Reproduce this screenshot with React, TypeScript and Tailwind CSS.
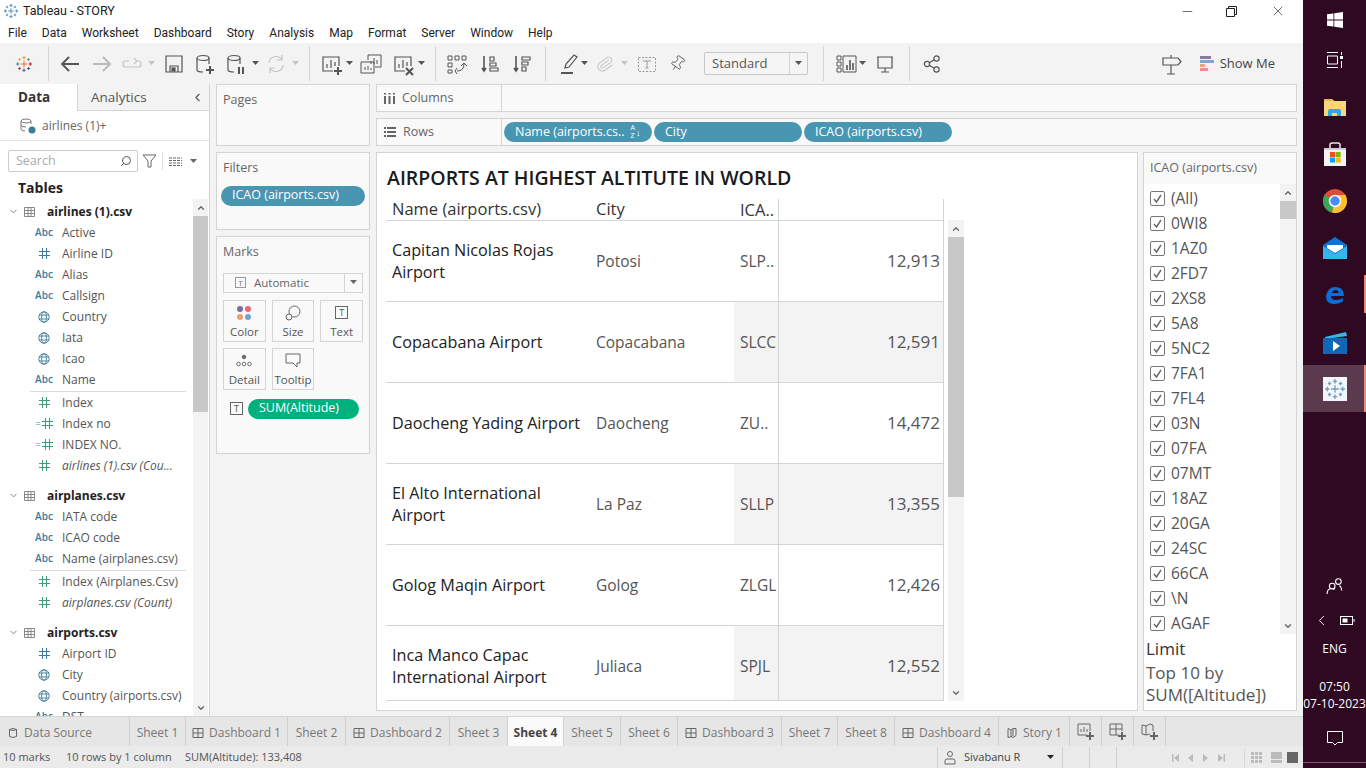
import type { ReactNode } from 'react';
import { X, Minus, ChevronLeft, ChevronDown, ChevronUp, Search, Paperclip, Pin } from 'lucide-react';

const S = ({ children, className = '' }: { children: ReactNode; className?: string }) => (
  <svg width="24" height="24" viewBox="0 0 24 24" fill="none" stroke="currentColor" strokeWidth="1.2" className={`shrink-0 ${className}`}>
    {children}
  </svg>
);

const Caret = ({ className = '' }: { className?: string }) => (
  <svg width="8" height="5" viewBox="0 0 8 5" className={`shrink-0 ${className}`}>
    <path d="M0 0h7L3.5 4z" fill="currentColor" />
  </svg>
);

const Sep = ({ className = '' }: { className?: string }) => <div className={`h-[35px] w-px shrink-0 bg-[#d4d4d4] ${className}`} />;

// plus marks of the logo, drawn on a 20 box
const plusMarks: [number, number, number, string][] = [
  [10, 10, 3.5, '#e8762b'],
  [10, 3, 2, '#e8a33d'],
  [10, 17, 2, '#5b6591'],
  [3, 10, 2, '#59879b'],
  [17, 10, 2, '#c72035'],
  [5, 5, 1.5, '#e8a33d'],
  [15, 5, 1.5, '#59879b'],
  [5, 15, 1.5, '#c72035'],
  [15, 15, 1.5, '#1f457e'],
];

function Plusses({ size, mono }: { size: number; mono?: string }) {
  return (
    <svg width={size} height={size} viewBox="0 0 20 20" className="shrink-0" strokeWidth="1.200">
      {plusMarks.map(([x, y, r, col], i) => (
        <path key={i} d={`M${x - r} ${y}h${r * 2}M${x} ${y - r}v${r * 2}`} stroke={mono ?? col} fill="none" />
      ))}
    </svg>
  );
}

function Toolbar() {
  return (
    <div className="flex h-[41px] shrink-0 items-center bg-[#f3f3f3] text-[#555]">
      <div className="ml-[15px]"><Plusses size={18} /></div>
      <Sep className="ml-[15px]" />
      <S className="ml-[9px]"><path d="M21 12H5M11 5l-7 7 7 7" strokeWidth="1.8" /></S>
      <S className="ml-[8px] text-[#b9b9b9]"><path d="M3 12h16M13 5l7 7-7 7" strokeWidth="1.8" /></S>
      <S className="ml-[6px] text-[#c4c4c4]"><path d="M9 9H5q-2 0-2 3t2 3h14q2 0 2-3t-2-3h-2M14 6l3 3-3 3" /></S>
      <Caret className="ml-[4px] text-[#c4c4c4]" />
      <S className="ml-[6px]"><path d="M4 4h16v16H4zM8 20v-6h8v6" /><rect x="10" y="16" width="3" height="3" fill="currentColor" /></S>
      <S className="ml-[7px]"><ellipse cx="10" cy="6" rx="6" ry="2.5" /><path d="M4 6v12q0 2 6 2M16 6v6" /><path d="M17 14v8M13 18h8" strokeWidth="2" /></S>
      <S className="ml-[7px]"><ellipse cx="10" cy="6" rx="6" ry="2.5" /><path d="M4 6v12q0 2 6 2M16 6v6" /><path d="M15 15v7M19 15v7" strokeWidth="2" /></S>
      <Caret className="ml-[4px]" />
      <S className="ml-[4px] text-[#c4c4c4]"><path d="M5 11a7 7 0 0 1 13-3M19 13a7 7 0 0 1-13 3M18 3v5h-5M6 21v-5h5" /></S>
      <Caret className="ml-[4px] text-[#c4c4c4]" />
      <Sep className="ml-[9px]" />
      <S className="ml-[9px]"><path d="M14 19H4V5h16v9M8 16v-4M12 16V8M16 14v-4" /><path d="M19 15v8M15 19h8" strokeWidth="2" /></S>
      <Caret className="ml-[3px]" />
      <S className="ml-[5px]"><path d="M9 8V3h13v12h-6M12 12V9M15 12V6M18 12V8M2 10h13v11H2zM6 18v-3M9 18v-4M12 18v-2" strokeWidth="1" /></S>
      <S className="ml-[8px]"><path d="M14 19H4V5h16v9M8 16v-4M12 16V8M16 14v-4" /><path d="M15 16l7 7M22 16l-7 7" strokeWidth="2" /></S>
      <Caret className="ml-[3px]" />
      <Sep className="ml-[9px]" />
      <S className="ml-[9px]"><path d="M3 4h4v4H3zM3 11h4v4H3zM10 4h4v4h-4zM17 4h4v4h-4zM3 18h4v3H3zM12 19q7 0 7-7M16 14l3-3 3 3M12 16l-2 3 2 3" strokeWidth="1" /></S>
      <S className="ml-[9px]"><path d="M6 4v15M4 16l2 3 2-3" strokeWidth="1.6" /><path d="M12 5h4v4h-4zM12 11h6v3h-6zM12 16h8v3h-8z" /></S>
      <S className="ml-[8px]"><path d="M6 4v15M4 16l2 3 2-3" strokeWidth="1.6" /><path d="M12 5h8v3h-8zM12 10h6v3h-6zM12 15h4v4h-4z" /></S>
      <Sep className="ml-[11px]" />
      <S className="ml-[10px]"><path d="M9 16l1-4 8-9 3 2-8 10zM9 16l4-1" /><path d="M5 21h12" strokeWidth="2" /></S>
      <Caret className="ml-[1px]" />
      <div className="ml-[4px] flex h-[24px] w-[24px] shrink-0 items-center justify-center text-[#c4c4c4]"><Paperclip size={18} strokeWidth={1.300} className="rotate-[10deg]" /></div>
      <Caret className="ml-[4px] text-[#c4c4c4]" />
      <S className="ml-[6px] text-[#999]"><rect x="3.5" y="5.5" width="17" height="14" strokeDasharray="2 1.5" strokeWidth="1" /><path d="M8 9h8M12 9v7M10.5 16h3" strokeWidth="1" /></S>
      <div className="ml-[6px] flex h-[24px] w-[24px] shrink-0 items-center justify-center"><Pin size={17} strokeWidth={1.200} className="rotate-[35deg]" /></div>
      <div className="ml-[15px] flex h-[23px] w-[104px] shrink-0 items-center rounded-[2px] border border-[#c8c8c8] bg-[#f5f5f5]">
        <span className="flex-1 pl-[7px] text-[13px] text-[#555]">Standard</span>
        <div className="flex h-full w-[18px] items-center justify-center border-l border-[#d4d4d4]"><Caret /></div>
      </div>
      <Sep className="ml-[15px]" />
      <S className="ml-[11px]"><path d="M2 4h4v4H2zM2 10h4v4H2zM2 16h4v4H2zM8 4h13v16H8z" strokeWidth="1" /><path d="M12 18v-5M15 18V8M18 18v-7" strokeWidth="1.6" /></S>
      <Caret />
      <S className="ml-[6px]"><path d="M4 5h16M5 5v11h14V5M12 16v4M8 20h8" /></S>
      <Sep className="ml-[12px]" />
      <S className="ml-[10px]"><circle cx="7" cy="12" r="2.600" /><circle cx="16.500" cy="6.500" r="2.600" /><circle cx="16.500" cy="17.500" r="2.600" /><path d="M9.300 10.700l5-3M9.300 13.300l5 3" /></S>
      <S className="ml-auto"><path d="M3 6h15l3 3.5-3 3.5H3zM11 6V3M11 13v9M7 22h8" /></S>
      <div className="ml-[16px] flex flex-col gap-px">
        <div className="h-[3px] w-[11px] bg-[#8b7aa6]" />
        <div className="h-[3px] w-[14px] bg-[#7ea7cf]" />
        <div className="h-[3px] w-[5px] bg-[#f0a27a]" />
        <div className="h-[3px] w-[8px] bg-[#f28a94]" />
      </div>
      <span className="mr-[28px] ml-[6px] text-[13px] text-[#444]">Show Me</span>
    </div>
  );
}

type Kind = 'abc' | 'num' | 'geo' | 'mnum' | 'calc';
type Field = { k: Kind; t: string; i?: boolean };

const Glyph = ({ k }: { k: Kind }) => {
  if (k === 'abc') return <span className="w-[24px] text-center text-[10px] font-semibold text-[#3e7a99]">Abc</span>;
  if (k === 'geo') {
    return (
      <div className="flex w-[24px] justify-center text-[#3e7a99]">
        <svg width="12" height="12" viewBox="0 0 12 12" fill="none" stroke="currentColor" strokeWidth="0.9">
          <circle cx="6" cy="6" r="5.2" />
          <ellipse cx="6" cy="6" rx="2.4" ry="5.2" />
          <path d="M1 4h10M1 8h10" />
        </svg>
      </div>
    );
  }
  const col = k === 'num' ? 'text-[#3e7a99]' : 'text-[#3f9b78]';
  return (
    <div className={`flex w-[24px] items-center justify-center ${col}`}>
      {k === 'calc' && <span className="mr-px text-[9px] leading-none">=</span>}
      <svg width="11" height="11" viewBox="0 0 11 11" fill="none" stroke="currentColor" strokeWidth="1">
        <path d="M3.5 0v11M7.5 0v11M0 3.5h11M0 7.5h11" />
      </svg>
    </div>
  );
};

const FieldRow = ({ f }: { f: Field }) => (
  <div className="flex h-[21px] items-center pl-[32px]">
    <Glyph k={f.k} />
    <span className={`ml-[6px] truncate text-[12px] text-[#555] ${f.i ? 'italic' : ''}`}>{f.t}</span>
  </div>
);

const TableHead = ({ t }: { t: string }) => (
  <div className="flex h-[21px] items-center pl-[8px]">
    <ChevronDown size={11} className="text-[#777]" />
    <svg width="11" height="10" viewBox="0 0 11 10" fill="none" stroke="#888" strokeWidth="1" className="ml-[5px]">
      <path d="M.5.5h10v9H.5zM.5 3.5h10M.5 6.5h10M4 .5v9M7 .5v9" />
    </svg>
    <span className="ml-[12px] text-[12px] font-bold text-[#222]">{t}</span>
  </div>
);

const Rule = () => <div className="mt-[1px] ml-[30px] h-[1px] w-[156px] bg-[#dcdcdc]" />;

function DataPane() {
  return (
    <div className="flex w-[210px] shrink-0 flex-col border-r border-[#d4d4d4] bg-white">
      <div className="flex h-[27px] shrink-0">
        <div className="flex w-[77px] items-center pb-px pl-[18px] text-[13.500px] font-bold text-[#333]">Data</div>
        <div className="flex flex-1 items-center justify-between border-b border-l border-[#d4d4d4] bg-[#f3f3f3] pr-[5px] pl-[13px] text-[13.500px] text-[#555]">
          Analytics
          <ChevronLeft size={13} />
        </div>
      </div>
      <div className="flex h-[30px] shrink-0 items-center border-b border-[#e4e4e4] pl-[19px]">
        <svg width="18" height="18" viewBox="0 0 18 18" fill="none" stroke="#777" strokeWidth="1">
          <ellipse cx="7" cy="4" rx="5" ry="2" />
          <path d="M2 4v8q0 2 4 2M12 4v3M2 8q0 2 5 2" />
          <circle cx="13" cy="13" r="3.5" fill="#3e7a99" stroke="none" />
        </svg>
        <span className="ml-[5px] text-[12px] text-[#666]">airlines (1)+</span>
      </div>
      <div className="mt-[9px] flex shrink-0 items-center pl-[8px]">
        <div className="flex h-[22px] w-[130px] items-center justify-between rounded-[2px] border border-[#ccc] pr-[5px] pl-[7px] text-[12.5px] text-[#aaa]">
          Search
          <Search size={12} className="scale-x-[-1] text-[#555]" />
        </div>
        <svg width="15" height="14" viewBox="0 0 15 14" fill="none" stroke="#666" strokeWidth="1" className="ml-[4px]">
          <path d="M1 1h13L9 7v6H6V7z" />
        </svg>
        <div className="ml-[5px] h-[18px] w-px bg-[#ddd]" />
        <svg width="13" height="9" viewBox="0 0 13 9" fill="none" stroke="#666" strokeWidth="1" className="ml-[6px]">
          <path d="M0 1h13M0 3.5h13M0 6h13M0 8.500h13" strokeDasharray="3 1" />
        </svg>
        <Caret className="ml-[8px] text-[#666]" />
      </div>
      <div className="flex h-[26px] shrink-0 items-end pl-[18px] text-[14px] font-bold text-[#222]">Tables</div>
      <div className="mt-[1px] flex min-h-0 flex-1">
        <div className="min-w-0 flex-1 overflow-hidden pt-[2px]">
          <TableHead t="airlines (1).csv" />
          {[
            { k: 'abc', t: 'Active' }, { k: 'num', t: 'Airline ID' }, { k: 'abc', t: 'Alias' }, { k: 'abc', t: 'Callsign' },
            { k: 'geo', t: 'Country' }, { k: 'geo', t: 'Iata' }, { k: 'geo', t: 'Icao' }, { k: 'abc', t: 'Name' },
          ].map((f) => <FieldRow key={f.t} f={f as Field} />)}
          <Rule />
          {[
            { k: 'mnum', t: 'Index' }, { k: 'calc', t: 'Index no' }, { k: 'calc', t: 'INDEX NO.' }, { k: 'mnum', t: 'airlines (1).csv (Cou...', i: true },
          ].map((f) => <FieldRow key={f.t} f={f as Field} />)}
          <div className="h-[9px]" />
          <TableHead t="airplanes.csv" />
          {[
            { k: 'abc', t: 'IATA code' }, { k: 'abc', t: 'ICAO code' }, { k: 'abc', t: 'Name (airplanes.csv)' },
          ].map((f) => <FieldRow key={f.t} f={f as Field} />)}
          <Rule />
          {[
            { k: 'mnum', t: 'Index (Airplanes.Csv)' }, { k: 'mnum', t: 'airplanes.csv (Count)', i: true },
          ].map((f) => <FieldRow key={f.t} f={f as Field} />)}
          <div className="h-[9px]" />
          <TableHead t="airports.csv" />
          {[
            { k: 'num', t: 'Airport ID' }, { k: 'geo', t: 'City' }, { k: 'geo', t: 'Country (airports.csv)' }, { k: 'abc', t: 'DST' },
          ].map((f) => <FieldRow key={f.t} f={f as Field} />)}
        </div>
        <div className="mr-px flex"><Scroll thumb="h-[196px]" track="w-[15px]" /></div>
      </div>
    </div>
  );
}

function Scroll({ thumb, track }: { thumb: string; track: string }) {
  return (
    <div className={`flex shrink-0 flex-col items-center bg-[#f3f3f3] ${track}`}>
      <div className="flex h-[17px] shrink-0 items-center justify-center"><ChevronUp size={10} strokeWidth={3} className="text-[#666]" /></div>
      <div className="flex min-h-0 w-full flex-1 flex-col">
        <div className={`w-full bg-[#c8c8c8] ${thumb}`} />
      </div>
      <div className="flex h-[17px] shrink-0 items-center justify-center"><ChevronDown size={10} strokeWidth={3} className="text-[#666]" /></div>
    </div>
  );
}

const cardCls = 'border border-[#d4d4d4] bg-[#f9f9f9]';

const Pill = ({ children, className }: { children: ReactNode; className: string }) => (
  <div className={`flex h-[20px] shrink-0 items-center rounded-full pl-[11px] text-[12.5px] text-white ${className}`}>{children}</div>
);

const MarkBtn = ({ label, children }: { label: string; children: ReactNode }) => (
  <div className="flex h-[42px] flex-col items-center justify-end border border-[#d4d4d4] pb-[2px] text-[11.5px] leading-[15px] text-[#555]">
    <div className="flex h-[22px] items-center">{children}</div>
    {label}
  </div>
);

function Cards() {
  return (
    <div className="flex w-[154px] shrink-0 flex-col gap-[6px]">
      <div className={`h-[62px] px-[6px] pt-[6px] text-[12.5px] text-[#666] ${cardCls}`}>Pages</div>
      <div className={`h-[78px] pt-[6px] text-[12.5px] text-[#666] ${cardCls}`}>
        <div className="px-[6px]">Filters</div>
        <Pill className="mt-[8px] ml-[4px] w-[144px] bg-[#4996b2]">ICAO (airports.csv)</Pill>
      </div>
      <div className={`h-[218px] pt-[6px] text-[12.5px] text-[#666] ${cardCls}`}>
        <div className="px-[6px]">Marks</div>
        <div className="mx-[6px] mt-[11px] flex h-[20px] items-center border border-[#d4d4d4] text-[11.5px]">
          <div className="ml-[11px] flex h-[11px] w-[11px] items-center justify-center border border-[#999] text-[8px] leading-none text-[#777]">T</div>
          <span className="ml-[8px] flex-1">Automatic</span>
          <div className="flex h-full w-[18px] items-center justify-center border-l border-[#d4d4d4]"><Caret /></div>
        </div>
        <div className="mx-[6px] mt-[7px] grid grid-cols-3 gap-x-[6px] gap-y-[6px]">
          <MarkBtn label="Color">
            <svg width="16" height="16" viewBox="0 0 16 16">
              <circle cx="4" cy="4" r="3" fill="#7f6aa0" /><circle cx="12" cy="4" r="3" fill="#f0627a" />
              <circle cx="4" cy="12" r="3" fill="#eda06e" /><circle cx="12" cy="12" r="3" fill="#74a3cf" />
            </svg>
          </MarkBtn>
          <MarkBtn label="Size">
            <svg width="16" height="16" viewBox="0 0 16 16" fill="none" stroke="#666" strokeWidth="1">
              <circle cx="9.500" cy="6.500" r="5.500" fill="#f9f9f9" /><circle cx="4" cy="12" r="3" fill="#f9f9f9" />
            </svg>
          </MarkBtn>
          <MarkBtn label="Text">
            <div className="flex h-[13px] w-[13px] items-center justify-center border border-[#666] text-[9px] leading-none text-[#555]">T</div>
          </MarkBtn>
          <MarkBtn label="Detail">
            <svg width="16" height="14" viewBox="0 0 16 14" fill="none" stroke="#666" strokeWidth="0.9">
              <circle cx="8" cy="3" r="1.800" fill="#666" /><circle cx="2.500" cy="10" r="1.800" /><circle cx="8" cy="10" r="1.800" /><circle cx="13.500" cy="10" r="1.800" />
            </svg>
          </MarkBtn>
          <MarkBtn label="Tooltip">
            <svg width="16" height="15" viewBox="0 0 16 15" fill="none" stroke="#666" strokeWidth="1">
              <path d="M1 1h14v9h-3v4l-4-4H1z" />
            </svg>
          </MarkBtn>
        </div>
        <div className="mt-[9px] ml-[13px] flex items-center">
          <div className="flex h-[13px] w-[13px] items-center justify-center border border-[#666] text-[9px] leading-none text-[#555]">T</div>
          <Pill className="ml-[5px] w-[111px] bg-[#00b180]">SUM(Altitude)</Pill>
        </div>
      </div>
    </div>
  );
}

const rows: { name: string[]; city: string; icao: string; val: string }[] = [
  { name: ['Capitan Nicolas Rojas', 'Airport'], city: 'Potosi', icao: 'SLP..', val: '12,913' },
  { name: ['Copacabana Airport'], city: 'Copacabana', icao: 'SLCC', val: '12,591' },
  { name: ['Daocheng Yading Airport'], city: 'Daocheng', icao: 'ZU..', val: '14,472' },
  { name: ['El Alto International', 'Airport'], city: 'La Paz', icao: 'SLLP', val: '13,355' },
  { name: ['Golog Maqin Airport'], city: 'Golog', icao: 'ZLGL', val: '12,426' },
  { name: ['Inca Manco Capac', 'International Airport'], city: 'Juliaca', icao: 'SPJL', val: '12,552' },
];

function Viz() {
  return (
    <div className="flex min-w-0 flex-1 flex-col border border-[#d4d4d4] bg-white pt-[12px] pl-[9px]">
      <div className="h-[34px] shrink-0 pl-[1px] text-[19.500px] leading-[26px] font-semibold whitespace-nowrap text-[#1a1a1a]">AIRPORTS AT HIGHEST ALTITUTE IN WORLD</div>
      <div className="flex min-h-0 items-start">
        <div className="w-[558px] shrink-0 border-r border-[#d4d4d4]">
          <div className="flex h-[22px] items-center border-b border-[#d4d4d4] text-[16.500px] text-[#333]">
            <span className="w-[204px] pl-[6px]">Name (airports.csv)</span>
            <span className="w-[144px] pl-[6px]">City</span>
            <span className="h-full w-[44px] pl-[6px] leading-[21px]">ICA..</span>
            <span className="h-full flex-1 border-l border-[#d4d4d4]" />
          </div>
          <div className="h-[480px] overflow-hidden border-b border-[#d4d4d4]">
            {rows.map((r, i) => (
              <div key={r.city} className="flex h-[81px] items-center border-b border-[#d4d4d4]">
                <div className="w-[204px] pl-[6px] text-[16.200px] leading-[22px] text-[#222]">
                  {r.name.map((n) => <div key={n}>{n}</div>)}
                </div>
                <div className="w-[144px] pt-px pl-[6px] text-[15.500px] text-[#555]">{r.city}</div>
                <div className={`flex h-full w-[44px] items-center pt-px pl-[6px] text-[15.500px] text-[#555] ${i % 2 ? 'bg-[#f3f3f3]' : ''}`}>{r.icao}</div>
                <div className={`flex h-full flex-1 items-center justify-end border-l border-[#d4d4d4] pr-[3px] text-[17px] text-[#555] ${i % 2 ? 'bg-[#f3f3f3]' : ''}`}>{r.val}</div>
              </div>
            ))}
          </div>
        </div>
        <div className="mt-[21px] ml-[4px] flex h-[481px]">
          <Scroll thumb="h-[260px]" track="w-[16px]" />
        </div>
      </div>
    </div>
  );
}

const icaoList = ['(All)', '0WI8', '1AZ0', '2FD7', '2XS8', '5A8', '5NC2', '7FA1', '7FL4', '03N', '07FA', '07MT', '18AZ', '20GA', '24SC', '66CA', '\\N', 'AGAF'];

function FilterCard() {
  return (
    <div className="ml-[5px] flex w-[154px] shrink-0 flex-col border border-[#d4d4d4] bg-white">
      <div className="flex h-[31px] shrink-0 items-center bg-[#f9f9f9] pl-[6px] text-[12.5px] text-[#666]">ICAO (airports.csv)</div>
      <div className="flex h-[450px] shrink-0">
        <div className="min-w-0 flex-1 overflow-hidden pt-[2px] pl-[6px]">
          {icaoList.map((c) => (
            <div key={c} className="flex h-[25px] items-center">
              <div className="flex h-[15px] w-[15px] items-center justify-center rounded-[2px] border border-[#777]">
                <svg width="11" height="11" viewBox="0 0 11 11" fill="none" stroke="#666" strokeWidth="1.4"><path d="M2 6l2.500 3L9 2" /></svg>
              </div>
              <span className="ml-[6px] text-[15.500px] text-[#555]">{c}</span>
            </div>
          ))}
        </div>
        <Scroll thumb="h-[18px]" track="w-[16px]" />
      </div>
      <div className="px-[2px] pt-[4px] text-[17px] leading-[22px] text-[#555]">
        <div className="font-medium text-[#333]">Limit</div>
        <div className="mt-[2px]">Top 10 by</div>
        <div>SUM([Altitude])</div>
      </div>
    </div>
  );
}

const ShelfLabel = ({ icon, label }: { icon: ReactNode; label: string }) => (
  <div className="flex w-[125px] shrink-0 items-center border-r border-[#d4d4d4] pl-[7px] text-[12.5px] text-[#666]">
    {icon}
    <span className="ml-[7px]">{label}</span>
  </div>
);

function Shelves() {
  return (
    <div className="flex shrink-0 flex-col gap-[6px]">
      <div className={`flex h-[28px] ${cardCls}`}>
        <ShelfLabel label="Columns" icon={<svg width="11" height="11" viewBox="0 0 11 11" fill="#666"><path d="M0 3h2v8H0zM4.500 3h2v8h-2zM9 3h2v8H9zM0 0h2v1.500H0zM4.500 0h2v1.500h-2zM9 0h2v1.500H9z" /></svg>} />
      </div>
      <div className={`flex h-[28px] ${cardCls}`}>
        <ShelfLabel label="Rows" icon={<svg width="12" height="10" viewBox="0 0 12 10" fill="#666"><path d="M0 0h2v2H0zM3 0h9v2H3zM0 4h2v2H0zM3 4h9v2H3zM0 8h2v2H0zM3 8h9v2H3z" /></svg>} />
        <div className="flex items-center gap-[2px] pl-[2px]">
          <Pill className="w-[148px] bg-[#4996b2]">
            <span className="whitespace-nowrap">Name (airports.cs..</span>
            <span className="ml-[6px] flex flex-col text-[7px] leading-[8px]"><span>A</span><span>Z</span></span>
            <span className="ml-px text-[9px] leading-none">↓</span>
          </Pill>
          <Pill className="w-[148px] bg-[#4996b2]">City</Pill>
          <Pill className="w-[148px] bg-[#4996b2]">ICAO (airports.csv)</Pill>
        </div>
      </div>
    </div>
  );
}

const tabs: { t: string; w: string; icon?: 'ds' | 'dash' | 'story'; on?: boolean }[] = [
  { t: 'Data Source', w: 'w-[130px]', icon: 'ds' },
  { t: 'Sheet 1', w: 'w-[56px]' },
  { t: 'Dashboard 1', w: 'w-[102px]', icon: 'dash' },
  { t: 'Sheet 2', w: 'w-[58px]' },
  { t: 'Dashboard 2', w: 'w-[104px]', icon: 'dash' },
  { t: 'Sheet 3', w: 'w-[58px]' },
  { t: 'Sheet 4', w: 'w-[56px]', on: true },
  { t: 'Sheet 5', w: 'w-[57px]' },
  { t: 'Sheet 6', w: 'w-[57px]' },
  { t: 'Dashboard 3', w: 'w-[104px]', icon: 'dash' },
  { t: 'Sheet 7', w: 'w-[56px]' },
  { t: 'Sheet 8', w: 'w-[57px]' },
  { t: 'Dashboard 4', w: 'w-[104px]', icon: 'dash' },
  { t: 'Story 1', w: 'w-[71px]', icon: 'story' },
];

const TabIcon = ({ k }: { k: 'ds' | 'dash' | 'story' }) => (
  <svg width="12" height="12" viewBox="0 0 12 12" fill="none" stroke="#666" strokeWidth="1" className="mr-[5px] shrink-0">
    {k === 'ds' && <path d="M2.500 2.500q3.500-2 7 0v7q-3.500 2-7 0zM2.500 2.500q3.500 2 7 0" />}
    {k === 'dash' && <path d="M1 1.500h10v9H1zM6 1.500v9M1 6h10" />}
    {k === 'story' && <path d="M2 1.500l3 1.500 2-1.500 3 0v7l-3 2-2-1-3 1zM5 3v6.500M7 2v7" />}
  </svg>
);

function Tabs() {
  return (
    <div className="flex h-[30px] shrink-0 border-t border-[#d4d4d4] bg-[#e6e6e6]">
      {tabs.map((tab) => (
        <div key={tab.t} className={`flex shrink-0 items-center whitespace-nowrap border-r border-[#d0d0d0] pt-[2px] text-[12px] ${tab.w} ${tab.on ? 'bg-[#fafafa] font-bold text-[#444]' : 'text-[#777]'} ${tab.icon === 'ds' ? 'pl-[7px]' : 'justify-center'}`}>
          {tab.icon && <TabIcon k={tab.icon} />}
          {tab.t}
        </div>
      ))}
      {['sheet', 'dash', 'story'].map((k) => (
        <div key={k} className="flex w-[32px] shrink-0 items-center justify-center border-r border-[#d0d0d0]">
          <svg width="17" height="17" viewBox="0 0 17 17" fill="none" stroke="#666" strokeWidth="1">
            {k === 'sheet' && <path d="M10 12H1V1h12v7M4 9V6M7 9V4M10 9V6" />}
            {k === 'dash' && <path d="M10 12H1V1h12v7M7 1v11M1 6h12" />}
            {k === 'story' && <path d="M1 2l4 1 4-2 3 1v6M1 2v9l4 1 4-1M5 3v9" />}
            <path d="M13 9v8M9 13h8" strokeWidth="2" />
          </svg>
        </div>
      ))}
    </div>
  );
}

function Status() {
  return (
    <div className="flex h-[22px] shrink-0 items-center bg-[#ebebeb] pt-px text-[11px] text-[#555]">
      <span className="w-[66px] pl-[3px]">10 marks</span>
      <span className="w-[119px]">10 rows by 1 column</span>
      <span className="w-[752px]">SUM(Altitude): 133,408</span>
      <div className="flex h-full w-[126px] items-center border-x border-[#d0d0d0] pr-[7px] pl-[5px] text-[#444]">
        <svg width="14" height="16" viewBox="0 0 14 16" fill="none" stroke="#666" strokeWidth="1"><circle cx="7" cy="4" r="2.500" /><path d="M2 14v-3q0-2 2-2h6q2 0 2 2v3z" /></svg>
        <span className="ml-[7px] flex-1">Sivabanu R</span>
        <Caret className="text-[#222]" />
      </div>
      <div className="h-full w-[27px] border-r border-[#d0d0d0]" />
      <div className="h-full w-[27px] border-r border-[#d0d0d0]" />
      <div className="flex flex-1 items-center pl-[55px] text-[#bbb]">
        <svg width="60" height="10" viewBox="0 0 60 10" fill="currentColor">
          <path d="M0 1h1.500v8H0zM7 1v8L2 5zM21 1v8l-5-4zM31 1l5 4-5 4zM46 1l5 4-5 4zM51.500 1H53v8h-1.500z" />
        </svg>
        <div className="ml-[12px] h-[18px] w-px bg-[#d8d8d8]" />
        <div className="ml-[6px] grid grid-cols-3 gap-px">
          {Array.from({ length: 9 }, (_, i) => <div key={i} className="h-[3px] w-[3px] bg-[#bbb]" />)}
        </div>
        <div className="ml-[9px] flex flex-col gap-px"><div className="h-[7px] w-[11px] bg-[#bbb]" /><div className="h-[3px] w-[11px] bg-[#bbb]" /></div>
        <div className="ml-[5px] h-[11px] w-[11px] bg-[#666]" />
      </div>
    </div>
  );
}

const Tile = ({ children, on, mark, className = 'h-[47px]' }: { children: ReactNode; on?: boolean; mark?: string; className?: string }) => (
  <div className={`relative flex shrink-0 items-center justify-center ${className} ${on ? 'bg-[#5c3a4e]' : ''}`}>
    {children}
    {mark && <div className={`absolute right-0 w-[2px] bg-[#f08a70] ${mark}`} />}
  </div>
);

function Taskbar() {
  return (
    <div className="flex w-[63px] shrink-0 flex-col bg-[#2f0822] text-white">
      <div className="flex shrink-0 flex-col">
        <Tile className="h-[36px] pt-[4px]">
          <svg width="16" height="16" viewBox="0 0 16 16" fill="white"><path d="M0 2.300l6.500-.9v6.200H0zM7.300 1.300L16 0v7.600H7.300zM0 8.400h6.500v6.200L0 13.700zM7.300 8.400H16V16l-8.700-1.200z" /></svg>
        </Tile>
        <Tile>
          <svg width="16" height="16" viewBox="0 0 16 16" fill="none" stroke="white" strokeWidth="1"><path d="M0 .5h11M0 15.500h11M.5 4h10v8H.5zM14.500 0v3M14.500 9v7" /><rect x="13" y="4" width="3" height="3" fill="white" stroke="none" /></svg>
        </Tile>
        <Tile>
          <svg width="22" height="18" viewBox="0 0 22 18"><path d="M0 1h8l2 2h12v15H0z" fill="#f5d77d" /><path d="M0 1h8l2 2H0z" fill="#e2b84a" /><path d="M4 18v-5q0-2 2-2h9q2 0 2 2v5h-4v-3H8v3z" fill="#32a6e6" /></svg>
        </Tile>
        <Tile>
          <svg width="24" height="24" viewBox="0 0 24 24"><path d="M7 7V3q0-2 2-2h6q2 0 2 2v4" fill="none" stroke="#e8e8e8" strokeWidth="1.500" /><path d="M1 6h22v18H1z" fill="#f3f3f3" /><path d="M1 6h22v2H1z" fill="#d0d0d0" /><path d="M7 10h5v5H7z" fill="#f25022" /><path d="M12.600 10h5v5h-5z" fill="#7fba00" /><path d="M7 15.500h5v5H7z" fill="#00a4ef" /><path d="M12.600 15.500h5v5h-5z" fill="#ffb900" /></svg>
        </Tile>
        <Tile>
          <svg width="24" height="24" viewBox="0 0 24 24"><circle cx="12" cy="12" r="12" fill="#dd4b39" /><path d="M12 12L1.600 6A12 12 0 0 0 9 23.600z" fill="#3aa757" /><path d="M12 12l-3 11.600A12 12 0 0 0 24 12 12 12 0 0 0 22.400 6H12z" fill="#fbc02d" /><circle cx="12" cy="12" r="5.500" fill="#4a8bf5" stroke="white" strokeWidth="1.500" /></svg>
        </Tile>
        <Tile>
          <svg width="24" height="22" viewBox="0 0 24 22"><path d="M0 8L12 0l12 8v14H0z" fill="#1670c9" /><path d="M0 9l12 8 12-8v13H0z" fill="#35b4ee" /><path d="M4 8h16v3l-8 5-8-5z" fill="white" /></svg>
        </Tile>
        <Tile mark="top-[4px] h-[38px]">
          <svg width="20" height="20" viewBox="0 0 20 20" fill="none"><path d="M2 11h17q0-9-9-9-7 0-9 9 0 8 8 8 6 0 9-3v-3q-3 2-7 2-5 0-5-4z" fill="#0a6fd4" /><path d="M7 8h7q-1-3-3.500-3T7 8z" fill="#2f0822" /></svg>
        </Tile>
        <Tile>
          <svg width="24" height="24" viewBox="0 0 24 24"><path d="M2 7l21-5 1 4-22 3z" fill="#3bb6e8" /><path d="M0 8h24v16H0z" fill="#0f67b8" /><path d="M10 11l7 5-7 5z" fill="white" /></svg>
        </Tile>
        <Tile on mark="inset-y-0">
          <div className="flex h-[24px] w-[24px] items-center justify-center bg-[#f3f5f8]">
            <Plusses size={22} mono="#6f9fc6" />
          </div>
        </Tile>
      </div>
      <div className="flex-1" />
      <div className="flex shrink-0 flex-col items-center pb-[5px] text-[12px]">
        <svg width="18" height="18" viewBox="0 0 16 16" fill="none" stroke="white" strokeWidth="1"><circle cx="5.500" cy="8" r="2.500" /><circle cx="11" cy="4" r="2.500" /><path d="M1 15q0-4 3-4.500M8 10q-1 1-1.500 1M14 12q0-3-2-4.500" /></svg>
        <div className="mt-[17px] flex w-full items-center justify-center gap-[10px] pr-[1px]">
          <ChevronLeft size={17} strokeWidth={1.300} />
          <svg width="15" height="9" viewBox="0 0 15 9" fill="none" stroke="white"><rect x=".5" y=".5" width="12" height="8" /><rect x="2.500" y="2.500" width="5" height="4" fill="white" stroke="none" /><path d="M14 3v3" /></svg>
        </div>
        <span className="mt-[11px] leading-[18px]">ENG</span>
        <span className="mt-[20px] leading-[17px]">07:50</span>
        <span className="leading-[17px]">07-10-2023</span>
        <svg width="16" height="16" viewBox="0 0 16 16" fill="none" stroke="white" strokeWidth="1" className="mt-[18px]"><path d="M.5 1.500h15v11h-5L8 15l-2.500-2.500h-5z" /></svg>
        <div className="mt-[16px] h-px w-full bg-[#7a5a70]" />
      </div>
    </div>
  );
}

export default function App() {
  return (
    <div className="flex h-[768px] w-[1366px] overflow-hidden bg-white font-['Open_Sans',sans-serif]">
      <div className="flex w-[1303px] shrink-0 flex-col">
        <div className="flex h-[22px] shrink-0 items-center font-['Roboto',sans-serif]">
          <div className="ml-[3px]"><Plusses size={16} mono="#4d8fc0" /></div>
          <span className="ml-[4px] text-[12.5px] text-[#222]">Tableau - STORY</span>
          <div className="flex-1" />
          <Minus size={15} strokeWidth={1} className="mr-[31px] text-[#222]" />
          <svg width="11" height="11" viewBox="0 0 11 11" fill="none" stroke="#222" strokeWidth="1" className="mr-[33px]"><path d="M.5 2.500h8v8h-8zM2.500 2.500v-2h8v8h-2" /></svg>
          <X size={16} strokeWidth={1} className="mr-[17px] text-[#222]" />
        </div>
        <div className="flex h-[21px] shrink-0 items-center gap-[15px] pl-[8px] font-['Roboto',sans-serif] text-[12px] text-[#222]">
          {['File', 'Data', 'Worksheet', 'Dashboard', 'Story', 'Analysis', 'Map', 'Format', 'Server', 'Window', 'Help'].map((m) => <span key={m}>{m}</span>)}
        </div>
        <Toolbar />
        <div className="flex min-h-0 flex-1 bg-[#f3f3f3]">
          <DataPane />
          <div className="flex min-w-0 flex-1 gap-[6px] pl-[6px]">
            <Cards />
            <div className="flex min-w-0 flex-1 flex-col gap-[6px] pr-[6px]">
              <Shelves />
              <div className="flex h-[559px] shrink-0">
                <Viz />
                <FilterCard />
              </div>
            </div>
          </div>
        </div>
        <Tabs />
        <Status />
      </div>
      <Taskbar />
    </div>
  );
}
